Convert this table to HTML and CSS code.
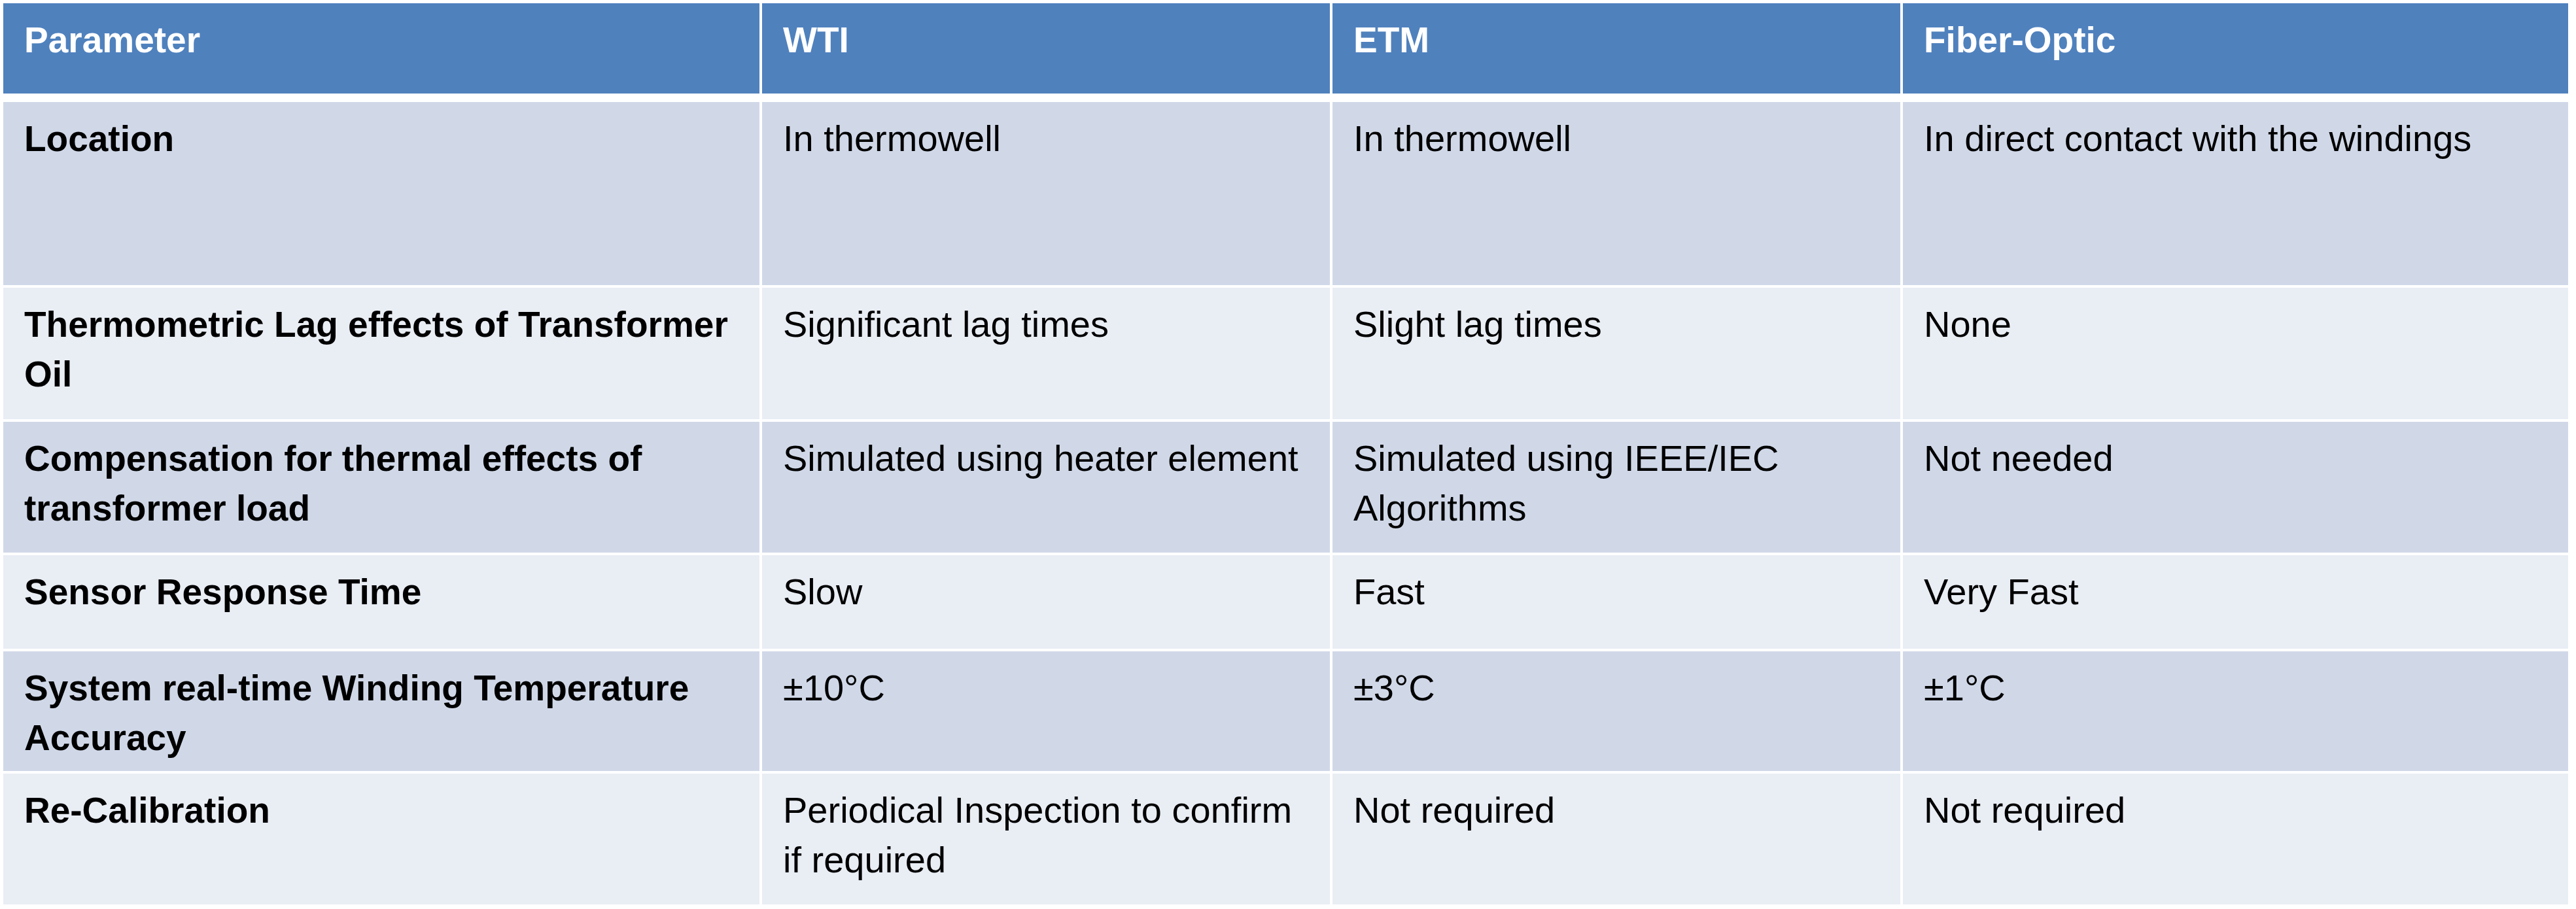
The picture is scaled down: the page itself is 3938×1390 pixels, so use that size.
FILE: index.html
```html
<!DOCTYPE html>
<html lang="en">
<head>
<meta charset="utf-8">
<title>Winding temperature measurement comparison</title>
<link rel="stylesheet" href="styles.css">
</head>
<body>
<div class="table" role="table">
  <div class="cell head" role="columnheader">Parameter</div>
  <div class="cell head" role="columnheader">WTI</div>
  <div class="cell head" role="columnheader">ETM</div>
  <div class="cell head" role="columnheader">Fiber-Optic</div>

  <div class="cell param band1" role="rowheader">Location</div>
  <div class="cell band1">In thermowell</div>
  <div class="cell band1">In thermowell</div>
  <div class="cell band1">In direct contact with the windings</div>

  <div class="cell param band2" role="rowheader">Thermometric Lag effects of Transformer Oil</div>
  <div class="cell band2">Significant lag times</div>
  <div class="cell band2">Slight lag times</div>
  <div class="cell band2">None</div>

  <div class="cell param band1" role="rowheader">Compensation for thermal effects of transformer load</div>
  <div class="cell band1">Simulated using heater element</div>
  <div class="cell band1">Simulated using IEEE/IEC Algorithms</div>
  <div class="cell band1">Not needed</div>

  <div class="cell param band2" role="rowheader">Sensor Response Time</div>
  <div class="cell band2">Slow</div>
  <div class="cell band2">Fast</div>
  <div class="cell band2">Very Fast</div>

  <div class="cell param band1" role="rowheader">System real-time Winding Temperature Accuracy</div>
  <div class="cell band1">±10°C</div>
  <div class="cell band1">±3°C</div>
  <div class="cell band1">±1°C</div>

  <div class="cell param band2" role="rowheader">Re-Calibration</div>
  <div class="cell band2">Periodical Inspection to confirm if required</div>
  <div class="cell band2">Not required</div>
  <div class="cell band2">Not required</div>
</div>
</body>
</html>
```

FILE: styles.css
```css
html, body {
  margin: 0;
  padding: 0;
  background: #ffffff;
}

body {
  padding: 5px 0 0 5px;
  font-family: "Liberation Sans", Arial, sans-serif;
  color: #000000;
}

.table {
  display: grid;
  grid-template-columns: 1156px 868px 868px 1017px;
  grid-template-rows: 147px 280px 201px 200px 143px 183px 200px;
  gap: 4px;
}

.cell {
  box-sizing: border-box;
  padding: 18px 30px 0 32px;
  font-size: 56px;
  line-height: 76px;
}

.head {
  background: #4f81bd;
  color: #ffffff;
  font-weight: bold;
  font-size: 55px;
  height: 138px;
  align-self: start;
}

.param {
  font-weight: bold;
  font-size: 55px;
}

.band1 {
  background: #d0d8e8;
}

.band2 {
  background: #e9edf4;
}
```
